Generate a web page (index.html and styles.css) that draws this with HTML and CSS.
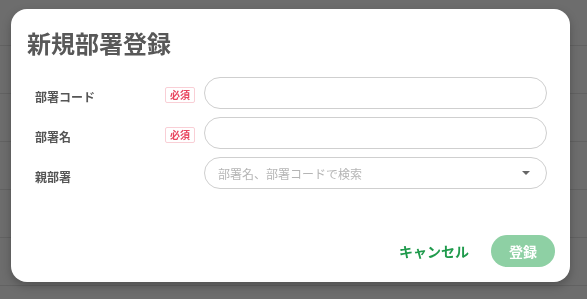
FILE: index.html
```html
<!DOCTYPE html>
<html lang="ja">
<head>
    <meta charset="UTF-8">
    <meta name="viewport" content="width=device-width, initial-scale=1.0">
    <title>新規部署登録</title>
    <link rel="stylesheet" href="styles.css">
</head>
<body>
    <div class="backdrop">
        <div class="row row-head"></div>
        <div class="row"></div>
        <div class="row"></div>
        <div class="row"></div>
        <div class="row"></div>
        <div class="row"></div>
    </div>

    <div class="overlay">
        <div class="dialog">
            <h1 class="dialog-title">新規部署登録</h1>

            <div class="form">
                <label class="field-label" for="code">部署コード</label>
                <span class="required">必須</span>
                <input class="field-input" type="text" id="code">

                <label class="field-label" for="name">部署名</label>
                <span class="required">必須</span>
                <input class="field-input" type="text" id="name">

                <label class="field-label" for="parent">親部署</label>
                <span></span>
                <div class="select" id="parent">
                    <span class="select-placeholder">部署名、部署コードで検索</span>
                    <span class="select-caret"></span>
                </div>
            </div>

            <div class="dialog-footer">
                <button class="btn-cancel" type="button">キャンセル</button>
                <button class="btn-submit" type="button" disabled>登録</button>
            </div>
        </div>
    </div>
</body>
</html>
```

FILE: styles.css
```css
body {
    margin: 0;
    padding: 0;
    font-family: 'Noto Sans CJK JP', 'Noto Sans', sans-serif;
    background: #6d6d6d;
    color: #555;
    overflow: hidden;
}

.backdrop {
    height: 299px;
}

.row {
    height: 47px;
    border-bottom: 1px solid #626262;
}

.row-head {
    height: 45px;
}

.overlay {
    position: fixed;
    inset: 0;
}

.dialog {
    box-sizing: border-box;
    width: 559px;
    height: 273px;
    margin: 9px 0 0 11px;
    padding: 16px 15px 15px 16px;
    background: #fff;
    border-radius: 16px;
    box-shadow: 0 4px 10px rgba(0,0,0,0.25);
    display: flex;
    flex-direction: column;
}

.dialog-title {
    margin: 0;
    font-size: 24px;
    line-height: 36px;
    font-weight: 700;
    color: #585858;
}

.form {
    margin: 16px 8px 0 8px;
    display: grid;
    grid-template-columns: 130px 39px 1fr;
    row-gap: 8px;
    align-items: center;
}

.field-label {
    font-size: 12px;
    font-weight: 600;
    color: #555;
    margin-top: 7px;
}

.required {
    box-sizing: border-box;
    width: 30px;
    height: 16px;
    margin-top: 3px;
    border: 1px solid #f9cfd6;
    border-radius: 2px;
    font-size: 10px;
    line-height: 14px;
    font-weight: 700;
    color: #e8455e;
    text-align: center;
}

.field-input,
.select {
    box-sizing: border-box;
    width: 343px;
    height: 32px;
    border: 1px solid #cfcfcf;
    border-radius: 16px;
    background: #fff;
    font-family: inherit;
    font-size: 12px;
    padding: 0 13px;
    outline: none;
}

.select {
    display: flex;
    align-items: center;
    justify-content: space-between;
    padding-right: 16px;
}

.select-placeholder {
    color: #b5b5b5;
    font-size: 12px;
}

.select-caret {
    width: 0;
    height: 0;
    border-left: 4px solid transparent;
    border-right: 4px solid transparent;
    border-top: 4px solid #666;
}

.dialog-footer {
    margin-top: auto;
    display: flex;
    justify-content: flex-end;
    align-items: center;
    gap: 14px;
}

.btn-cancel {
    border: none;
    background: none;
    padding: 0 8px;
    font-family: inherit;
    font-size: 14px;
    font-weight: 700;
    color: #1f9a4c;
}

.btn-submit {
    width: 64px;
    height: 32px;
    border: none;
    border-radius: 16px;
    background: #8ed0a4;
    color: #fff;
    font-family: inherit;
    font-size: 14px;
    font-weight: 700;
}
```
